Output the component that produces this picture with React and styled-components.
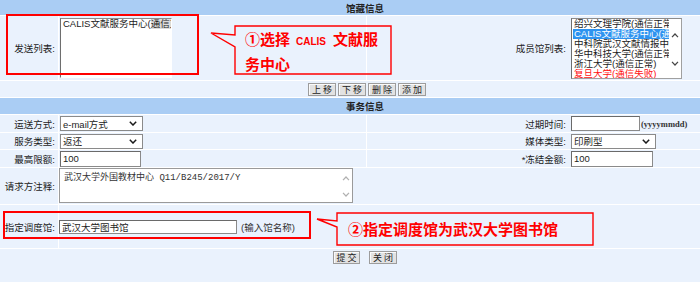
import React from 'react';
import styled, { createGlobalStyle } from 'styled-components';

const GlobalStyle = createGlobalStyle`
  html, body {
    margin: 0;
    padding: 0;
    background: #eaf2fd;
    overflow: hidden;
  }
  body {
    font-family: "Liberation Sans", "Noto Sans CJK SC", sans-serif;
    font-size: 9.5px;
    color: #1c1c1c;
  }
`;

const Page = styled.div`
  position: relative;
  width: 730px;
  height: 282px;
  background: #ffffff;
  display: flex;
  flex-direction: column;
  gap: 1px;
`;

const Header = styled.div`
  height: ${(p) => p.h}px;
  flex-shrink: 0;
  background: #aacdf4;
  display: flex;
  align-items: center;
  justify-content: center;
  font-weight: bold;
  color: #222;
`;

const Row = styled.div`
  display: grid;
  grid-template-columns: ${(p) => p.cols || '58px 307px 1fr'};
  column-gap: 1px;
  height: ${(p) => (p.h ? `${p.h}px` : 'auto')};
  flex: ${(p) => (p.grow ? 1 : '0 0 auto')};
`;

const Cell = styled.div`
  background: #eaf2fd;
  display: flex;
  align-items: ${(p) => (p.top ? 'flex-start' : 'center')};
  justify-content: ${(p) => p.justify || 'flex-start'};
  padding: ${(p) => p.pad || '0'};
  gap: ${(p) => p.gap || 0}px;
  white-space: nowrap;
  overflow: hidden;
`;

const Label = styled(Cell)`
  justify-content: flex-end;
  padding-right: 3px;
`;

const RightLabel = styled.div`
  width: 199px;
  margin-right: 5px;
  text-align: right;
  flex-shrink: 0;
`;

const ListBox = styled.div`
  width: ${(p) => p.w}px;
  height: ${(p) => p.h}px;
  background: #fff;
  box-sizing: border-box;
  border-top: 1px solid #8c8c8c;
  border-left: 1px solid #6e6e6e;
  border-right: 1px solid ${(p) => (p.framed ? '#a0a0a0' : '#fff')};
  border-bottom: 1px solid ${(p) => (p.framed ? '#a0a0a0' : '#fff')};
  display: flex;
  overflow: hidden;
`;

const Items = styled.div`
  flex: 1;
  min-width: 0;
  padding-left: 1px;
`;

const Item = styled.div`
  height: 10px;
  line-height: 10px;
  white-space: nowrap;
  overflow: hidden;
  padding-left: 1px;
  color: ${(p) => (p.selected ? '#fff' : p.red ? '#ff1010' : '#1c1c1c')};
  background: ${(p) => (p.selected ? '#2e93f0' : 'transparent')};
`;

const Faded = styled.span`
  background: #dcdcdc;
`;

const ScrollCol = styled.div`
  width: 12px;
  flex-shrink: 0;
  display: flex;
  flex-direction: column;
  align-items: center;
  padding-top: ${(p) => p.top}px;
  gap: ${(p) => p.gap}px;
`;

const Arrow = ({ up, color }) => (
  <svg width="8" height="5" viewBox="0 0 8 5">
    <path
      d={up ? 'M1 4.2 L4 1 L7 4.2' : 'M1 0.8 L4 4 L7 0.8'}
      fill="none"
      stroke={color}
      strokeWidth="1.2"
    />
  </svg>
);

const Select = styled.div`
  width: ${(p) => p.w}px;
  height: 15px;
  box-sizing: border-box;
  background: #fff;
  border: 1px solid #8a8a8a;
  display: flex;
  align-items: center;
  justify-content: space-between;
  padding: 0 5px 0 2px;
`;

const Chevron = () => (
  <svg width="8" height="5" viewBox="0 0 8 5">
    <path d="M0.8 0.8 L4 4 L7.2 0.8" fill="none" stroke="#1a1a1a" strokeWidth="1.5" />
  </svg>
);

const TextBox = styled.div`
  width: ${(p) => p.w}px;
  height: ${(p) => p.h || 16}px;
  box-sizing: border-box;
  background: #fff;
  border: 1px solid #8a8a8a;
  border-top-color: #6a6a6a;
  border-left-color: #6a6a6a;
  padding-left: 2px;
  display: flex;
  align-items: center;
  flex-shrink: 0;
`;

const Hint = styled.span`
  margin-left: ${(p) => p.ml || 1}px;
  font-family: ${(p) => (p.serif ? '"Liberation Serif", serif' : 'inherit')};
  font-size: ${(p) => (p.serif ? '8.5px' : 'inherit')};
  font-weight: ${(p) => (p.serif ? 'bold' : 'normal')};
  color: #333;
`;

const Memo = styled.div`
  align-self: flex-start;
  width: 294px;
  height: 35px;
  box-sizing: border-box;
  background: #fff;
  border: 1px solid #9a9a9a;
  display: flex;
`;

const MemoText = styled.div`
  flex: 1;
  padding: 1px 0 0 4px;
  font-family: "Liberation Mono", "Noto Sans CJK SC", monospace;
  font-size: 9px;
  color: #333;
`;

const Btn = styled.button`
  width: ${(p) => p.w || 28}px;
  height: 13px;
  padding: 0 0 0 2px;
  box-sizing: border-box;
  font-family: "Noto Sans CJK SC", sans-serif;
  font-size: 9px;
  line-height: 11px;
  letter-spacing: 2px;
  color: #222;
  background: #e2e2e2;
  border: 1px solid #9c9c9c;
  box-shadow: inset 1px 1px 0 #fafafa;
`;

const RedBox = styled.div`
  position: absolute;
  left: ${(p) => p.x}px;
  top: ${(p) => p.y}px;
  width: ${(p) => p.w}px;
  height: ${(p) => p.h}px;
  box-sizing: border-box;
  border: 2px solid #ff0000;
  pointer-events: none;
`;

const CalloutWrap = styled.div`
  position: absolute;
  left: ${(p) => p.x}px;
  top: ${(p) => p.y}px;
  width: ${(p) => p.w}px;
  height: ${(p) => p.h}px;
  box-sizing: border-box;
  padding: ${(p) => p.pad};
  display: flex;
  align-items: ${(p) => (p.center ? 'center' : 'flex-start')};
  font-family: "Noto Sans CJK SC", sans-serif;
  font-size: 15px;
  font-weight: bold;
  line-height: 22px;
  color: #ff0000;
  white-space: nowrap;
`;

const CalloutFrame = styled.svg`
  position: absolute;
  left: -30px;
  top: 0;
  overflow: visible;
`;

const Latin = styled.span`
  font-family: "Liberation Sans", sans-serif;
  font-size: 10px;
  margin: 0 7px 0 6px;
`;

function Callout({ x, y, w, h, tip, base, pad, center, children }) {
  const pts = [
    [0, 0], [w, 0], [w, h], [0, h], [0, base[1]], tip, [0, base[0]],
  ]
    .map(([a, b]) => `${a + 30},${b}`)
    .join(' ');
  return (
    <CalloutWrap x={x} y={y} w={w} h={h} pad={pad} center={center}>
      <CalloutFrame width={w + 30} height={h}>
        <polygon points={pts} fill="none" stroke="#ff0000" strokeWidth="1.4" />
      </CalloutFrame>
      <div style={{ position: 'relative' }}>{children}</div>
    </CalloutWrap>
  );
}

const members = [
  { name: '绍兴文理学院(通信正常)' },
  { name: 'CALIS文献服务中心(通信正常)', selected: true },
  { name: '中科院武汉文献情报中心(通信正常)' },
  { name: '华中科技大学(通信正常)' },
  { name: '浙江大学(通信正常)' },
  { name: '复旦大学(通信失败)', red: true },
];

export default function App() {
  return (
    <>
      <GlobalStyle />
      <Page>
        <Header h={15}>馆藏信息</Header>
        <Row h={64}>
          <Label>发送列表:</Label>
          <Cell pad="0 0 0 1px">
            <ListBox w={112} h={60}>
              <Items>
                <Item>
                  CALIS文献服务中心(<Faded>通信正常)</Faded>
                </Item>
              </Items>
            </ListBox>
          </Cell>
          <Cell>
            <RightLabel>成员馆列表:</RightLabel>
            <ListBox w={111} h={61} framed>
              <Items>
                {members.map((m) => (
                  <Item key={m.name} selected={m.selected} red={m.red}>
                    {m.name}
                  </Item>
                ))}
              </Items>
              <ScrollCol top={14} gap={23}>
                <Arrow up color="#444" />
                <Arrow color="#444" />
              </ScrollCol>
            </ListBox>
          </Cell>
        </Row>
        <Row h={16} cols="1fr">
          <Cell justify="center" gap={2} pad="0 0 0 4px">
            <Btn>上移</Btn>
            <Btn>下移</Btn>
            <Btn>删除</Btn>
            <Btn>添加</Btn>
          </Cell>
        </Row>
        <Header h={16}>事务信息</Header>
        <Row h={17}>
          <Label>运送方式:</Label>
          <Cell pad="0 0 0 1px">
            <Select w={83}>
              e-mail方式
              <Chevron />
            </Select>
          </Cell>
          <Cell>
            <RightLabel>过期时间:</RightLabel>
            <TextBox w={69} h={15} />
            <Hint serif>(yyyymmdd)</Hint>
          </Cell>
        </Row>
        <Row h={16}>
          <Label>服务类型:</Label>
          <Cell pad="0 0 0 1px">
            <Select w={83}>
              返还
              <Chevron />
            </Select>
          </Cell>
          <Cell>
            <RightLabel>媒体类型:</RightLabel>
            <Select w={85}>
              印刷型
              <Chevron />
            </Select>
          </Cell>
        </Row>
        <Row h={17}>
          <Label>最高限额:</Label>
          <Cell pad="0 0 0 1px">
            <TextBox w={81}>100</TextBox>
          </Cell>
          <Cell>
            <RightLabel>*冻结金额:</RightLabel>
            <TextBox w={82}>100</TextBox>
          </Cell>
        </Row>
        <Row h={36} cols="58px 1fr">
          <Label>请求方注释:</Label>
          <Cell top>
            <Memo>
              <MemoText>武汉大学外国教材中心 Q11/B245/2017/Y</MemoText>
              <ScrollCol top={7} gap={11}>
                <Arrow up color="#b0b0b0" />
                <Arrow color="#b0b0b0" />
              </ScrollCol>
            </Memo>
          </Cell>
        </Row>
        <Row h={43} cols="58px 1fr">
          <Label>指定调度馆:</Label>
          <Cell>
            <TextBox w={178} h={14}>武汉大学图书馆</TextBox>
            <Hint ml={4}>(输入馆名称)</Hint>
          </Cell>
        </Row>
        <Row grow cols="1fr">
          <Cell top justify="center" gap={9} pad="2px 0 0 0">
            <Btn w={27}>提交</Btn>
            <Btn w={28}>关闭</Btn>
          </Cell>
        </Row>

        <RedBox x={6} y={14} w={193} h={61} />
        <RedBox x={3} y={211} w={308} h={28} />
        <Callout x={235} y={26} w={156} h={48} tip={[-24, 7]} base={[9, 21]} pad="2px 0 0 10px">
          <span>
            ①选择<Latin>CALIS</Latin>文献服
            <br />
            务中心
          </span>
        </Callout>
        <Callout x={337} y={213} w={256} h={32} tip={[-20, 6]} base={[8, 14]} pad="0 0 0 11px" center>
          <span>②指定调度馆为武汉大学图书馆</span>
        </Callout>
      </Page>
    </>
  );
}
